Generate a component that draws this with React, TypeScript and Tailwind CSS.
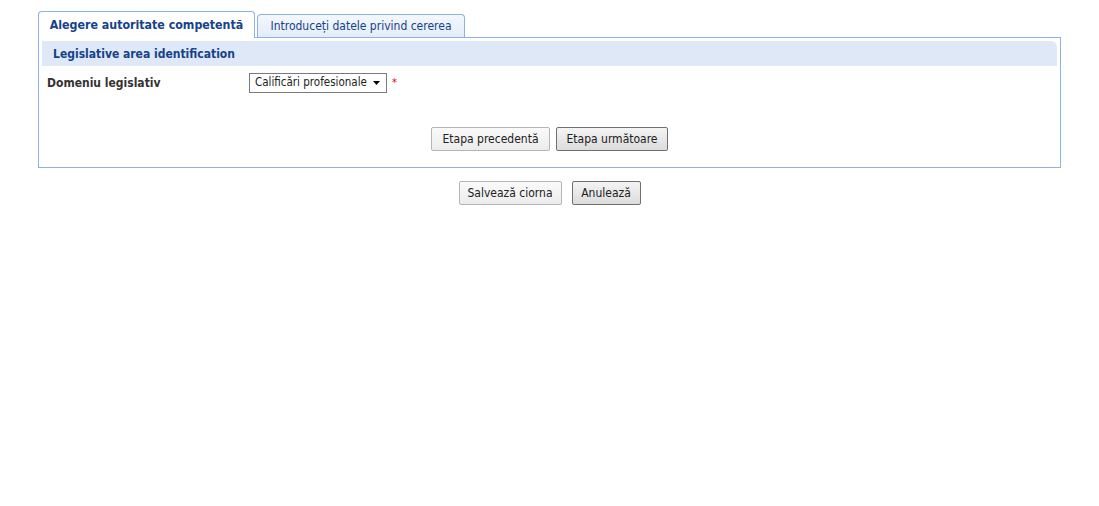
export default function App() {
  const font = { fontFamily: "Tahoma, 'DejaVu Sans Condensed', 'Liberation Sans', sans-serif" }

  return (
    <div className="min-h-screen bg-white pt-[11px] px-[38px] text-[12px] text-[#333]" style={font}>
      <div className="w-[1023px]">
        {/* Tabs */}
        <div className="flex items-end gap-[2px] h-[26px] relative z-10">
          <div className="w-[217px] h-[27px] flex items-center justify-center border border-b-0 border-[#8db2e3] rounded-t-[4px] bg-white text-[12.3px] font-bold text-[#15428b] -mb-px">
            Alegere autoritate competentă
          </div>
          <div className="w-[208px] h-[23px] flex items-center justify-center border border-b-0 border-[#8db2e3] rounded-t-[4px] bg-gradient-to-b from-[#f4f8fd] to-[#e3ecf8] text-[#15428b]">
            Introduceți datele privind cererea
          </div>
        </div>

        {/* Panel */}
        <div className="border border-[#8db2e3] p-[3px] pb-[16px]">
          <div className="h-[25px] flex items-center px-[11px] bg-[#dfe8f6] rounded-tr-[6px] text-[12px] font-bold text-[#15428b]">
            Legislative area identification
          </div>

          <div className="flex items-center mt-[7px] pl-[5px]">
            <div className="w-[202px] font-bold text-[#333]">Domeniu legislativ</div>
            <div className="h-[20px] w-[138px] border border-[#7a7a7a] flex items-center justify-between pl-[5px] pr-[5px] text-[11.5px] text-[#222]">
              <span>Calificări profesionale</span>
              <svg width="8" height="4" viewBox="0 0 8 4">
                <path d="M0 0h7L3.5 4z" fill="#000" />
              </svg>
            </div>
            <span className="ml-[5px] text-[#d00] text-[11px]">*</span>
          </div>

          <div className="flex justify-center gap-[6px] mt-[34px]">
            <button className="h-[24px] w-[119px] border border-[#b5b5b5] rounded-[2px] bg-gradient-to-b from-[#fafafa] to-[#ececec] text-[#222]">
              Etapa precedentă
            </button>
            <button className="h-[24px] w-[112px] border border-[#707070] rounded-[2px] bg-gradient-to-b from-[#f4f4f4] to-[#dcdcdc] text-[#222]">
              Etapa următoare
            </button>
          </div>
        </div>

        {/* Bottom actions */}
        <div className="flex justify-center gap-[10px] mt-[13px]">
          <button className="h-[24px] w-[103px] border border-[#b5b5b5] rounded-[2px] bg-gradient-to-b from-[#fafafa] to-[#ececec] text-[#222]">
            Salvează ciorna
          </button>
          <button className="h-[24px] w-[69px] border border-[#707070] rounded-[2px] bg-gradient-to-b from-[#f4f4f4] to-[#dcdcdc] text-[#222]">
            Anulează
          </button>
        </div>
      </div>
    </div>
  )
}
